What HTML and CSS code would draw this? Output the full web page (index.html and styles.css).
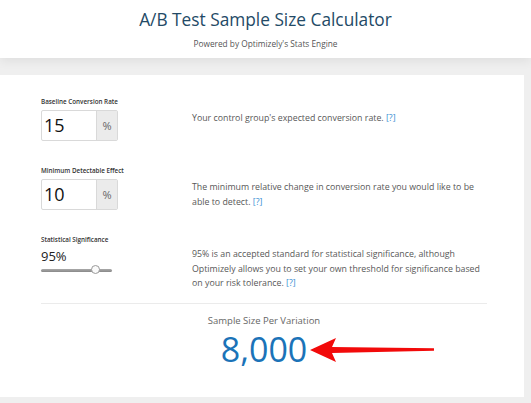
FILE: index.html
```html
<!DOCTYPE html>
<html>
<head>
<meta charset="utf-8">
<link rel="stylesheet" href="styles.css">
</head>
<body>
<header class="header">
  <h1 class="title">A/B Test Sample Size Calculator</h1>
  <p class="subtitle">Powered by Optimizely's Stats Engine</p>
</header>
<main class="card">
  <section class="row">
    <div class="control">
      <div class="label">Baseline Conversion Rate</div>
      <div class="input-group"><span class="value">15</span><span class="addon">%</span></div>
    </div>
    <p class="desc">Your control group's expected conversion rate. <a class="help">[?]</a></p>
  </section>
  <section class="row">
    <div class="control">
      <div class="label">Minimum Detectable Effect</div>
      <div class="input-group"><span class="value">10</span><span class="addon">%</span></div>
    </div>
    <p class="desc">The minimum relative change in conversion rate you would like to be able to detect. <a class="help">[?]</a></p>
  </section>
  <section class="row row-last">
    <div class="control">
      <div class="label">Statistical Significance</div>
      <div class="sig">95%</div>
      <div class="slider"><span class="track"></span><span class="thumb"></span></div>
    </div>
    <p class="desc desc-sig">95% is an accepted standard for statistical significance, although Optimizely allows you to set your own threshold for significance based on your risk tolerance. <a class="help">[?]</a></p>
  </section>
  <section class="result">
    <div class="result-label">Sample Size Per Variation</div>
    <div class="result-value">8,000</div>
    <svg class="arrow" width="130" height="30" viewBox="0 0 130 30">
      <polygon points="0,15 26,3 22,12 124,13.2 124,15.8 22,18 26,27" fill="#f20a0a"/>
    </svg>
  </section>
</main>
</body>
</html>
```
FILE: styles.css
```css
html, body {
  margin: 0;
  padding: 0;
}
body {
  background: #efefef;
  font-family: "Open Sans", "Liberation Sans", sans-serif;
  width: 531px;
  height: 403px;
  overflow: hidden;
}
.header {
  background: #fff;
  height: 58px;
  text-align: center;
  box-shadow: 0 3px 10px rgba(0, 0, 0, 0.07);
  position: relative;
  z-index: 1;
}
.title {
  margin: 0;
  padding-top: 8px;
  font-size: 17.3px;
  font-weight: 400;
  color: #234a66;
  line-height: 24px;
}
.subtitle {
  margin: 6px 0 0;
  font-size: 8.3px;
  color: #555;
  line-height: 11px;
}
.card {
  background: #fff;
  margin: 17px 7px 0 0;
  height: 322px;
  padding: 22px 37px 0 41px;
  box-sizing: border-box;
}
.row {
  display: grid;
  grid-template-columns: 151px 290px;
  height: 69px;
}
.row-last {
  height: 68px;
}
.label {
  font-size: 6.3px;
  font-weight: 600;
  color: #333;
  line-height: 9px;
}
.input-group {
  margin-top: 4px;
  width: 77px;
  height: 31px;
  box-sizing: border-box;
  border: 1px solid #d9d9d9;
  border-radius: 2px;
  display: flex;
}
.value {
  flex: 1;
  font-size: 18px;
  color: #111;
  line-height: 29px;
  padding-left: 2px;
}
.addon {
  width: 20px;
  background: #ebebeb;
  border-left: 1px solid #d9d9d9;
  color: #666;
  font-size: 11px;
  line-height: 29px;
  text-align: center;
}
.desc {
  margin: 0;
  padding-top: 14px;
  font-size: 8.8px;
  line-height: 14.5px;
  color: #585858;
}
.desc-sig {
  padding-top: 12px;
}
.help {
  display: inline-block;
  line-height: 12px;
  color: #3a8fd3;
}
.sig {
  margin-top: 3px;
  font-size: 13px;
  line-height: 18px;
  color: #222;
}
.slider {
  position: relative;
  width: 71px;
  height: 10px;
  margin-top: 1px;
}
.track {
  position: absolute;
  left: 0;
  right: 0;
  top: 3px;
  height: 3px;
  border-radius: 2px;
  background: linear-gradient(#aaa, #888);
}
.thumb {
  position: absolute;
  left: 50px;
  top: -1px;
  width: 9px;
  height: 9px;
  border-radius: 50%;
  background: #fafafa;
  border: 1px solid #999;
  box-sizing: border-box;
}
.result {
  border-top: 1px solid #ebebeb;
  text-align: center;
  position: relative;
  padding-top: 10px;
}
.result-label {
  font-size: 9.5px;
  color: #666;
  line-height: 13px;
}
.result-value {
  margin-top: 4px;
  font-size: 34px;
  line-height: 36px;
  color: #1b73b8;
}
.arrow {
  position: absolute;
  left: 269px;
  top: 31px;
}
```
